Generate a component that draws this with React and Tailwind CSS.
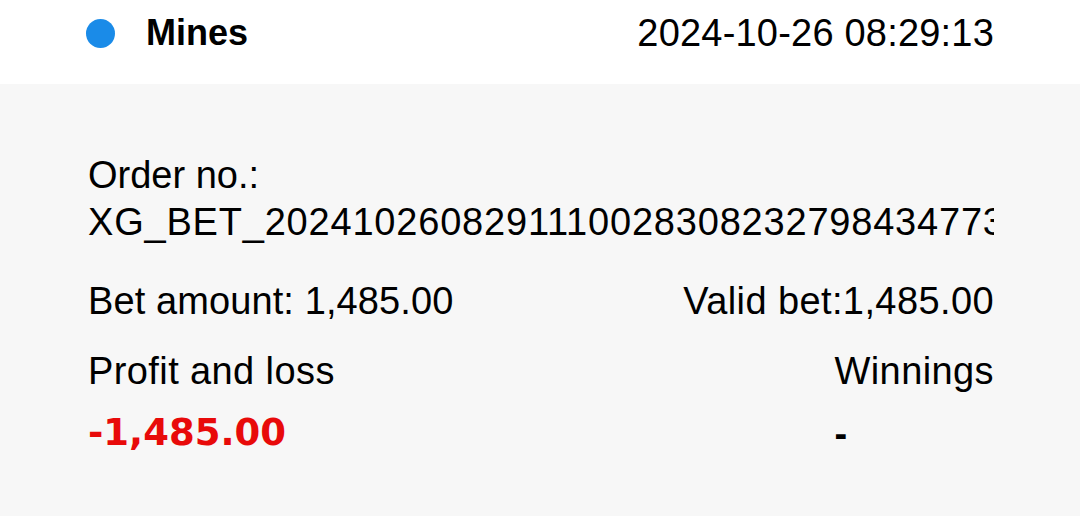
export default function App() {
  return (
    <div className="w-[1080px] h-[516px] overflow-hidden bg-[#f7f7f7] text-black" style={{ fontFamily: '"Liberation Sans", Arial, sans-serif' }}>
      <div className="h-[84px] bg-white flex items-start justify-between pl-[86px] pr-[86px] pt-[12px]">
        <div className="flex items-start">
          <div className="w-[29px] h-[29px] rounded-full bg-[#1a8be8] mt-[7px]" />
          <div className="ml-[31px] text-[36px] font-bold leading-[42px]">Mines</div>
        </div>
        <div className="text-[38px] leading-[42px] tracking-[0.2px]">2024-10-26 08:29:13</div>
      </div>
      <div className="pl-[88px] pr-[86px] pt-[68px]">
        <div className="text-[38px] leading-[47px]">Order no.:</div>
        <div className="text-[38px] leading-[47px] overflow-hidden whitespace-nowrap tracking-[0.8px]">XG_BET_2024102608291110028308232798434773</div>
        <div className="flex justify-between mt-[32px] text-[38px] leading-[47px]">
          <div className="tracking-[0.1px]">Bet amount: 1,485.00</div>
          <div className="tracking-[0.4px]">Valid bet:1,485.00</div>
        </div>
        <div className="flex justify-between mt-[23px]">
          <div className="flex flex-col">
            <div className="text-[38px] leading-[47px] tracking-[0.4px]">Profit and loss</div>
            <div className="text-[37px] leading-[47px] font-bold text-[#e80a0a] mt-[14px]" style={{ fontFamily: '"DejaVu Sans", sans-serif' }}>-1,485.00</div>
          </div>
          <div className="flex flex-col items-start">
            <div className="text-[38px] leading-[47px] tracking-[0.4px]">Winnings</div>
            <div className="text-[38px] leading-[47px] font-bold mt-[16px]">-</div>
          </div>
        </div>
      </div>
    </div>
  );
}
